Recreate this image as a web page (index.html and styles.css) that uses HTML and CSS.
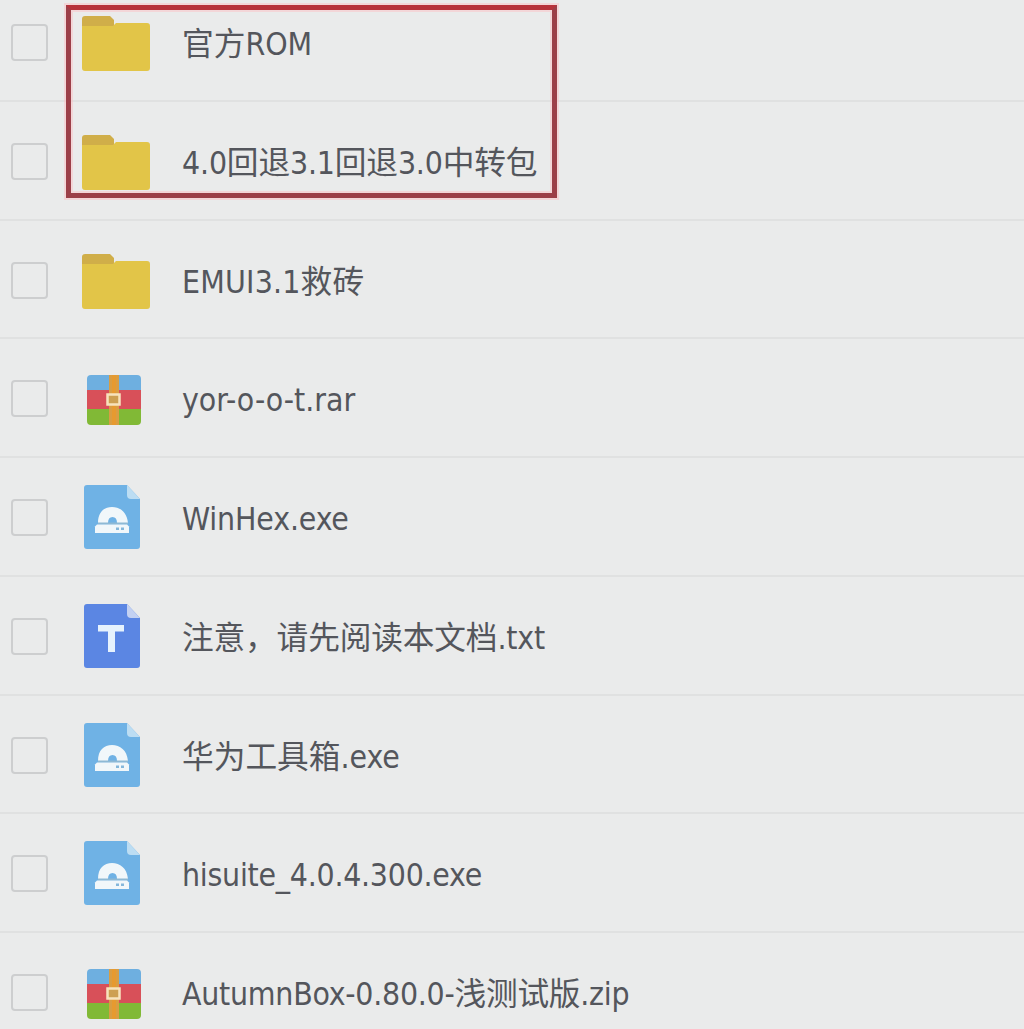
FILE: index.html
```html
<!DOCTYPE html>
<html lang="zh-CN">
<head>
<meta charset="utf-8">
<title>文件列表</title>
<link rel="stylesheet" href="styles.css">
</head>
<body>
<svg class="defs" aria-hidden="true">
  <symbol id="folder" viewBox="0 0 68 56">
    <path d="M0 14V3q0-3 3-3h25l4 4v10z" fill="#d0ae49"/>
    <path d="M0 10h31l3-3h31q3 0 3 3v42q0 3-3 3H3q-3 0-3-3z" fill="#e2c548"/>
  </symbol>
  <symbol id="archive" viewBox="0 0 54 50">
    <path d="M0 16V4q0-4 4-4h46q4 0 4 4v12z" fill="#6eafe0"/>
    <path d="M0 15h54v20H0z" fill="#d85059"/>
    <path d="M0 34h54v12q0 4-4 4H4q-4 0-4-4z" fill="#81b936"/>
    <path d="M22 0h10v50H22z" fill="#d99d43"/>
    <path d="M25 0h4v50h-4z" fill="#e69a30"/>
    <path d="M20.500 19.500h12v10h-12z" fill="#cda052" stroke="#f7e3bd" stroke-width="2.500"/>
  </symbol>
  <symbol id="exe" viewBox="0 0 56 64">
    <path d="M3 0h40l13 14v47q0 3-3 3H3q-3 0-3-3V3q0-3 3-3z" fill="#6fb2e5"/>
    <path d="M43 0l13 14h-9q-4 0-4-4z" fill="#bcddf3"/>
    <path d="M14 38C14 27 20 22 28 22s15 5 16 16H33q0-6-4.500-6T24 38z" fill="#f1f7fa"/>
    <path d="M14 37.500h30v2H14z" fill="#8eb9d4"/>
    <path d="M13 39.500h30l2 2V48H11v-6.500z" fill="#f1f7fa"/>
    <path d="M32 42.500h3v2.500h-3zM37 42.500h3v2.500h-3z" fill="#84b7db"/>
  </symbol>
  <symbol id="txt" viewBox="0 0 56 64">
    <path d="M3 0h40l13 14v47q0 3-3 3H3q-3 0-3-3V3q0-3 3-3z" fill="#5b86e3"/>
    <path d="M43 0l13 14h-9q-4 0-4-4z" fill="#c3d1f2"/>
    <path d="M14 21h26v6.500H31V48h-7V27.500H14z" fill="#e6f2fd"/>
  </symbol>
</svg>
<main class="files">
  <div class="row"><span class="check"></span><span class="icon"><svg class="folder"><use href="#folder"/></svg></span><span class="name">官方ROM</span></div>
  <div class="row"><span class="check"></span><span class="icon"><svg class="folder"><use href="#folder"/></svg></span><span class="name snug">4.0回退3.1回退3.0中转包</span></div>
  <div class="row"><span class="check"></span><span class="icon"><svg class="folder"><use href="#folder"/></svg></span><span class="name loose">EMUI3.1救砖</span></div>
  <div class="row"><span class="check"></span><span class="icon"><svg class="archive"><use href="#archive"/></svg></span><span class="name">yor-o-o-t.rar</span></div>
  <div class="row"><span class="check"></span><span class="icon"><svg class="doc"><use href="#exe"/></svg></span><span class="name snug">WinHex.exe</span></div>
  <div class="row"><span class="check"></span><span class="icon"><svg class="doc"><use href="#txt"/></svg></span><span class="name snug">注意，请先阅读本文档.txt</span></div>
  <div class="row"><span class="check"></span><span class="icon"><svg class="doc"><use href="#exe"/></svg></span><span class="name">华为工具箱.exe</span></div>
  <div class="row"><span class="check"></span><span class="icon"><svg class="doc"><use href="#exe"/></svg></span><span class="name tight">hisuite_4.0.4.300.exe</span></div>
  <div class="row"><span class="check"></span><span class="icon"><svg class="archive"><use href="#archive"/></svg></span><span class="name tight">AutumnBox-0.80.0-浅测试版.zip</span></div>
</main>
<div class="highlight"></div>
</body>
</html>
```
FILE: styles.css
```css
* { box-sizing: border-box; }
body {
  margin: 0;
  height: 1029px;
  overflow: hidden;
  position: relative;
  background: #eaebeb;
  color: #54565c;
  font-family: "DejaVu Sans Condensed", "Noto Sans CJK SC", sans-serif;
  font-size: 31.7px;
}
.defs { display: none; }
.files { margin-top: -17px; }
.row {
  display: flex;
  align-items: flex-start;
  height: 118.75px;
  padding-left: 11px;
  border-bottom: 2px solid #e0e1e1;
}
.row:last-child { border-bottom: 0; }
.check {
  width: 37px;
  height: 37px;
  margin-top: 41px;
  border: 2px solid #cdcecf;
  border-radius: 4px;
}
.icon { width: 134px; padding-left: 34px; }
.icon svg { display: block; }
.folder { width: 68px; height: 56px; margin-top: 33px; }
.archive { width: 54px; height: 50px; margin: 35.500px 0 0 5px; }
.doc { width: 56px; height: 64px; margin: 27px 0 0 2px; }
.name {
  height: 48px;
  margin-top: 37px;
  line-height: 48px;
  white-space: nowrap;
}
.snug { letter-spacing: -.15px; }
.tight { letter-spacing: -.25px; }
.loose { letter-spacing: .2px; }
.highlight {
  position: absolute;
  left: 66px;
  top: 5px;
  width: 491px;
  height: 193px;
  border: 5px solid #9c3f48;
  border-top-color: #b7333b;
  box-shadow: 0 0 0 2px rgba(255, 188, 194, .45), inset 0 0 0 2px rgba(255, 188, 194, .45);
}
```
